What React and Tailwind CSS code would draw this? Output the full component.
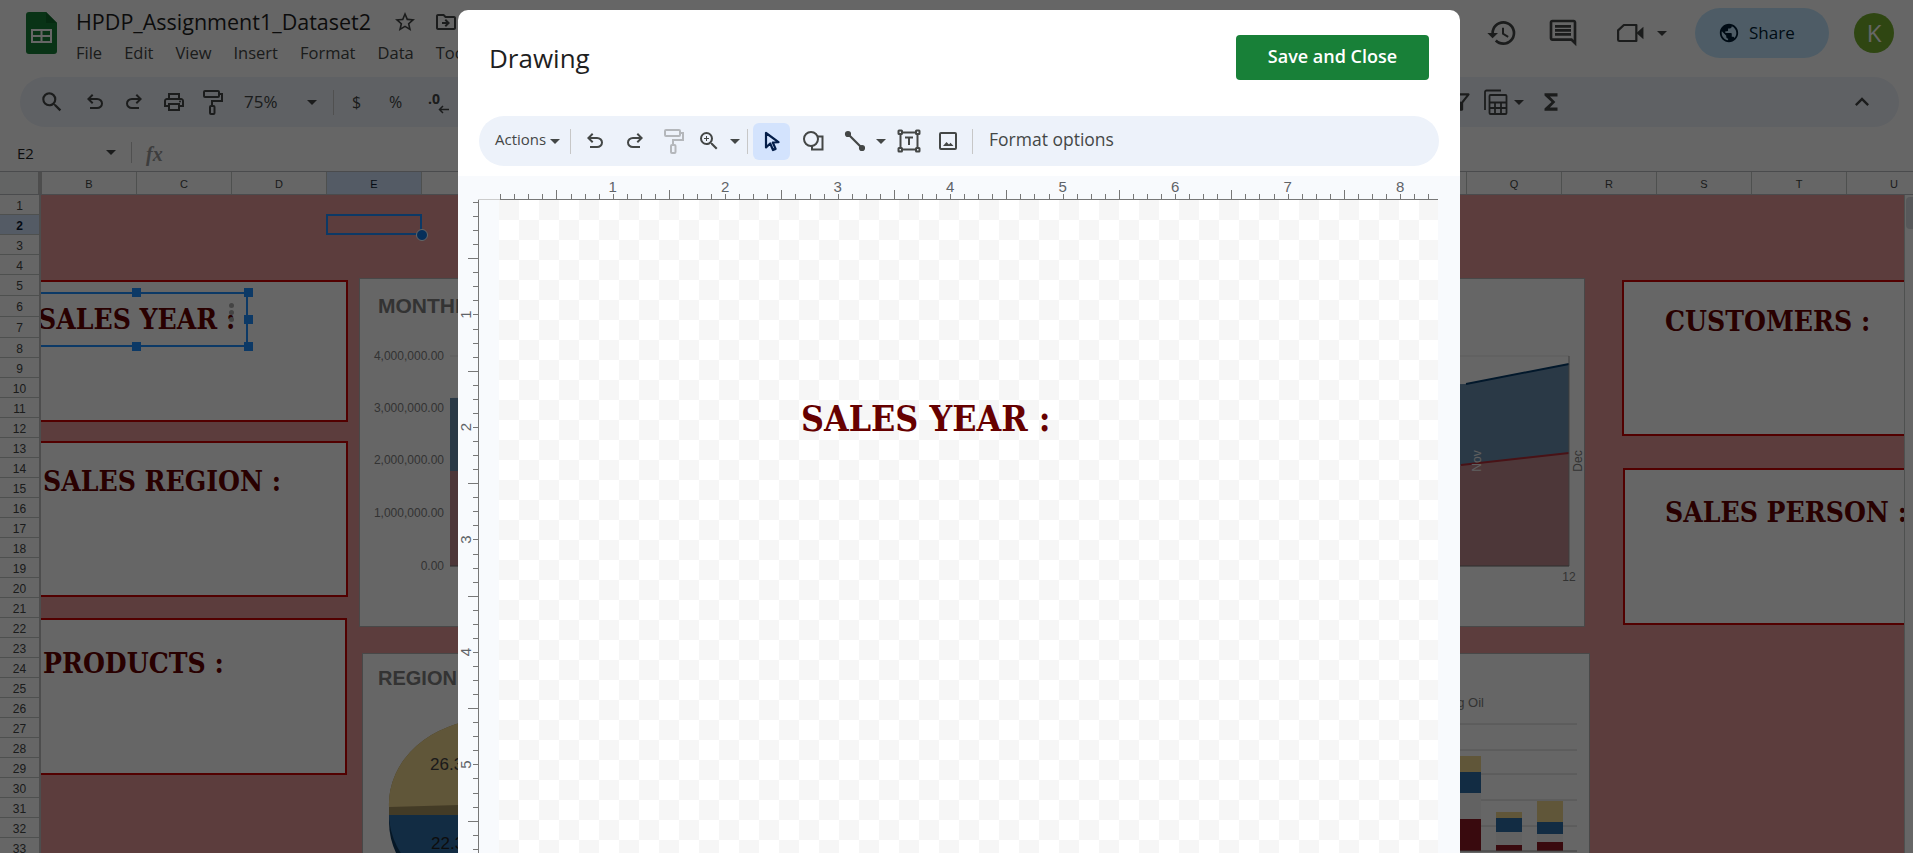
import React from 'react';
import { MdSearch, MdOutlinePrint, MdHistory, MdOutlineComment, MdPublic, MdKeyboardArrowUp, MdStarBorder, MdOutlineDriveFileMove, MdOutlineFilterAlt, MdFunctions, MdZoomIn } from 'react-icons/md';

const COLUMNS = ['B', 'C', 'D', 'E', 'F', 'G', 'H', 'I', 'J', 'K', 'L', 'M', 'N', 'O', 'P', 'Q', 'R', 'S', 'T', 'U'];
const ROWS = Array.from({ length: 33 }, (_, i) => i + 1);
const UNDO = 'M7 19v-2h7.1q1.575 0 2.738-1T18 13.5q0-1.5-1.162-2.5T14.1 10H7.8l2.6 2.6L9 14 4 9l5-5 1.4 1.4L7.8 8h6.3q2.425 0 4.163 1.575Q20 11.15 20 13.5t-1.737 3.925Q16.525 19 14.1 19Z';

const Caret = ({ color = '#444746' }) => (
    <svg width="10" height="5" viewBox="0 0 10 5" className="shrink-0"><path d="M0 0h10L5 5z" fill={color} /></svg>
);

const Undo = ({ flip, size = 24 }) => (
    <svg width={size} height={size} viewBox="0 0 24 24" fill="#444746" className={flip ? '-scale-x-100' : ''}><path d={UNDO} /></svg>
);

const Roller = ({ color = '#444746' }) => (
    <svg width="24" height="28" viewBox="0 0 24 28" fill="none" stroke={color} strokeWidth="2">
        <rect x="4" y="3" width="15" height="6" rx="1" />
        <path d="M19 6h3v7H12v5" />
        <rect x="10" y="18" width="4.5" height="8" rx="1" />
    </svg>
);

const Slot = ({ className, children }) => (
    <div className={`flex shrink-0 items-center justify-center ${className}`}>{children}</div>
);

const SheetsLogo = () => (
    <svg width="31" height="42" viewBox="0 0 31 42" className="shrink-0">
        <path d="M3 0h17l11 11v28a3 3 0 0 1-3 3H3a3 3 0 0 1-3-3V3a3 3 0 0 1 3-3z" fill="#188038" />
        <path d="M20 0v11h11z" fill="#0f6a2c" />
        <path d="M6 18h19v12H6zM6 24h19M15.5 18v12" fill="none" stroke="#fff" strokeWidth="2" />
    </svg>
);

const Header = () => (
    <div className="flex h-[66px] items-center pl-[26px] pr-[19px]">
        <SheetsLogo />
        <div className="ml-[19px] flex flex-col self-start pt-[7px]">
            <div className="flex h-[30px] items-center">
                <span className="text-[21.5px] text-[#1f1f1f]">HPDP_Assignment1_Dataset2</span>
                <MdStarBorder className="ml-[22px] text-[#444746]" size={24} />
                <MdOutlineDriveFileMove className="ml-[17px] text-[#444746]" size={24} />
            </div>
            <div className="mt-[3px] flex gap-[22px] text-[16.5px] leading-[26px] text-[#444746]">
                <span>File</span><span>Edit</span><span>View</span><span>Insert</span><span>Format</span><span>Data</span><span>Tools</span>
            </div>
        </div>
        <div className="ml-auto flex items-center">
            <Slot className="w-[32px]"><MdHistory size={32} className="text-[#444746]" /></Slot>
            <Slot className="ml-[29px] w-[32px]"><MdOutlineComment size={32} className="text-[#444746]" /></Slot>
            <Slot className="ml-[36px] w-[32px]">
                <svg width="36" height="28" viewBox="0 0 36 28" fill="none">
                    <path d="M10 5h14v18H5a1.5 1.5 0 0 1-1.500-1.500V11z" stroke="#444746" strokeWidth="2.500" strokeLinejoin="round" />
                    <path d="M24 14l8-7v14z" fill="#444746" />
                </svg>
            </Slot>
            <div className="ml-[10px]"><Caret /></div>
            <div className="ml-[28px] flex h-[50px] w-[134px] items-center rounded-full bg-[#c2e7ff] pl-[23px]">
                <MdPublic size={22} className="text-[#001d35]" />
                <span className="ml-[9px] text-[17px] text-[#001d35]">Share</span>
            </div>
            <div className="ml-[25px] flex h-[40px] w-[40px] items-center justify-center rounded-full bg-[#76b02f] text-[24px] text-white">K</div>
        </div>
    </div>
);

const SheetToolbar = () => (
    <div className="mx-[14px] ml-[20px] mt-[11px] flex h-[50px] items-center rounded-full bg-[#edf2fa] pl-[12px] pr-[23px] text-[#444746]">
        <Slot className="w-[40px]"><MdSearch size={26} /></Slot>
        <Slot className="w-[46px]"><Undo /></Slot>
        <Slot className="w-[32px]"><Undo flip /></Slot>
        <Slot className="w-[48px]"><MdOutlinePrint size={24} /></Slot>
        <Slot className="w-[28px]"><Roller /></Slot>
        <span className="ml-[18px] w-[34px] text-[17px]">75%</span>
        <div className="ml-[29px]"><Caret /></div>
        <div className="ml-[16px] h-[25px] w-px bg-[#c7c7c7]" />
        <span className="ml-[18px] w-[12px] text-[16px]">$</span>
        <span className="ml-[25px] w-[16px] text-[16px]">%</span>
        <div className="relative ml-[23px] h-[24px] w-[22px]">
            <span className="absolute left-0 top-[-2px] text-[14px] font-bold">.0</span>
            <svg className="absolute bottom-0 right-0" width="12" height="9" viewBox="0 0 12 9" fill="none" stroke="#444746" strokeWidth="1.500"><path d="M11 4.500H2M5 1L1.500 4.500 5 8" /></svg>
        </div>
        <div className="ml-auto flex items-center">
            <MdOutlineFilterAlt size={26} />
            <svg className="ml-[10px]" width="24" height="28" viewBox="0 0 24 28" fill="none" stroke="#444746" strokeWidth="1.800">
                <path d="M1 22V4a1.500 1.500 0 0 1 1.500-1.500H17" />
                <rect x="5.500" y="7" width="17" height="19" rx="1" />
                <path d="M5.500 14.500h17M5.500 20h17M11 14.500V26M17 14.500V26" />
            </svg>
            <div className="ml-[6px]"><Caret /></div>
            <MdFunctions size={26} className="ml-[14px]" />
            <MdKeyboardArrowUp size={28} className="ml-[284px]" />
        </div>
    </div>
);

const FormulaBar = () => (
    <div className="mt-[7px] flex h-[38px] items-center border-b border-[#b8bcc0] pl-[17px]">
        <span className="w-[89px] pt-[2px] text-[15px] text-[#1f1f1f]">E2</span>
        <Caret />
        <div className="ml-[15px] h-[21px] w-px bg-[#c7c7c7]" />
        <span className="ml-[14px] pt-[2px] font-['Liberation_Serif'] text-[20px] font-bold italic text-[#9a9a9a]">fx</span>
    </div>
);

const ColumnHeaders = () => (
    <div className="flex h-[23px] border-b border-[#b8bcc0] font-['Liberation_Sans'] text-[11px] text-[#444746]">
        <div className="w-[38px] shrink-0 bg-[#f8f9fa]" />
        <div className="w-[4px] shrink-0 bg-[#c0c0c0]" />
        {COLUMNS.map(col => (
            <div key={col} className={`flex w-[95px] shrink-0 items-center justify-center border-r border-[#c4c7c5] pt-[2px] ${col === 'E' ? 'bg-[#d3e3fd] text-[#0b1b33]' : ''}`}>{col}</div>
        ))}
    </div>
);

const RowHeaders = () => (
    <div className="flex w-[41px] shrink-0 flex-col border-r-2 border-[#c0c0c0] font-['Liberation_Sans'] text-[12px] text-[#444746]">
        {ROWS.map(row => {
            const tall = row >= 5 && row <= 7;
            return (
                <div key={row} className={`flex shrink-0 items-center justify-center border-b border-[#c4c7c5] pt-[2px] ${tall ? 'h-[21px]' : 'h-[20px]'} ${row === 2 ? 'bg-[#d3e3fd] font-bold text-[#0b1b33]' : ''}`}>{row}</div>
            );
        })}
    </div>
);

const cardTitle = "font-['DejaVu_Serif_Condensed','DejaVu_Serif',serif] text-[28px] font-bold leading-none whitespace-nowrap text-[#660000]";

const MonthlyChart = () => {
    const labels = [['4,000,000.00', 77], ['3,000,000.00', 129], ['2,000,000.00', 181], ['1,000,000.00', 234], ['0.00', 287]];
    return (
        <div className="absolute left-[318px] top-[83px] h-[349px] w-[1226px] border border-[#b5b5b5] bg-white">
            <div className="pl-[18px] pt-[11px] font-['Liberation_Sans'] text-[21px] font-bold text-[#7f7f7f]">MONTHLY SALES</div>
            <svg className="absolute left-0 top-0" width="1226" height="349" fontFamily="Liberation Sans" fontSize="12" fill="#7f7f7f">
                {labels.map(([text, y]) => (
                    <g key={text}>
                        <text x="84" y={y + 4} textAnchor="end">{text}</text>
                        <line x1="90" x2="1209" y1={y} y2={y} stroke="#e6e6e6" />
                    </g>
                ))}
                <path d="M90 119L1106 105L1209 85V174L1101 186L90 192z" fill="#6a8fb0" />
                <path d="M90 192L1101 186L1209 174V287H90z" fill="#c08a8e" />
                <path d="M1106 105L1209 85" stroke="#063c6b" strokeWidth="2" fill="none" />
                <path d="M1101 186L1209 174" stroke="#b52d37" strokeWidth="2" fill="none" />
                <line x1="1209" x2="1209" y1="77" y2="287" stroke="#999" />
                <line x1="90" x2="1209" y1="287" y2="287" stroke="#777" />
                <text transform="translate(1121 182) rotate(-90)" fill="#eee" fontSize="12" textAnchor="middle">Nov</text>
                <text transform="translate(1222 182) rotate(-90)" fontSize="12" textAnchor="middle">Dec</text>
                <text x="1209" y="302" textAnchor="middle">12</text>
            </svg>
        </div>
    );
};

const RegionChart = () => {
    const bars = [
        { x: 1083, w: 35, parts: [[102, 16, '#f0d68f'], [118, 21, '#2f6fa8'], [139, 26, '#f4f4f4'], [165, 32, '#8f1a24']] },
        { x: 1133, w: 26, parts: [[158, 6, '#f0d68f'], [164, 14, '#2f6fa8'], [178, 13, '#f4f4f4'], [191, 6, '#8f1a24']] },
        { x: 1174, w: 26, parts: [[147, 21, '#f0d68f'], [168, 12, '#2f6fa8'], [180, 8, '#f4f4f4'], [188, 9, '#8f1a24']] },
    ];
    return (
        <div className="absolute left-[321px] top-[458px] h-[250px] w-[1228px] border border-[#b5b5b5] bg-white">
            <div className="pl-[15px] pt-[9px] font-['Liberation_Sans'] text-[20px] font-bold text-[#7f7f7f]">REGION</div>
            <svg className="absolute left-0 top-0" width="1228" height="250" fontFamily="Liberation Sans" fill="#7f7f7f">
                <ellipse cx="128" cy="168" rx="102" ry="85" fill="#0d3a60" />
                <ellipse cx="132" cy="160" rx="106" ry="85" fill="#2f6fa8" />
                <path d="M26 153a102 85 0 0 1 204-6v14L26 161z" fill="#a8945f" />
                <path d="M26 153a102 85 0 0 1 204-6l-204 6z" fill="#f0d68f" />
                <text x="67" y="116" fontSize="17" fill="#444">26.3%</text>
                <text x="68" y="195" fontSize="17" fill="#222">22.3%</text>
                <text x="1121" y="53" fontSize="13" textAnchor="end">Cooking Oil</text>
                {[70, 96, 120, 146, 172].map(y => (
                    <line key={y} x1="1040" x2="1214" y1={y} y2={y} stroke="#d0d0d0" />
                ))}
                {bars.map(bar => bar.parts.map(([y, h, color]) => (
                    <rect key={`${bar.x}-${y}`} x={bar.x} y={y} width={bar.w} height={h} fill={color} />
                )))}
                <line x1="1040" x2="1214" y1="197" y2="197" stroke="#999" />
            </svg>
        </div>
    );
};

const SheetCanvas = () => (
    <div className="relative flex-1 overflow-hidden bg-[#e69a99]">
        <div className="absolute left-[-20px] top-[85px] h-[142px] w-[327px] border-2 border-[#cc0000] bg-white pl-[15px] pt-[24px]">
            <div className={cardTitle}>SALES YEAR :</div>
        </div>
        <div className="absolute left-[-20px] top-[246px] h-[156px] w-[327px] border-2 border-[#cc0000] bg-white pl-[20px] pt-[25px]">
            <div className={cardTitle}>SALES REGION :</div>
        </div>
        <div className="absolute left-[-20px] top-[423px] h-[157px] w-[326px] border-2 border-[#cc0000] bg-white pl-[20px] pt-[30px]">
            <div className={cardTitle}>PRODUCTS :</div>
        </div>

        <div className="absolute left-[-20px] top-[97px] h-[55px] w-[227px] border-2 border-[#1f8fff]" />
        <div className="absolute left-[91px] top-[93px] h-[9px] w-[9px] bg-[#1f8fff]" />
        <div className="absolute left-[91px] top-[147px] h-[9px] w-[9px] bg-[#1f8fff]" />
        <div className="absolute left-[203px] top-[93px] h-[9px] w-[9px] bg-[#1f8fff]" />
        <div className="absolute left-[203px] top-[120px] h-[9px] w-[9px] bg-[#1f8fff]" />
        <div className="absolute left-[203px] top-[147px] h-[9px] w-[9px] bg-[#1f8fff]" />
        <div className="absolute left-[188px] top-[108px] flex flex-col gap-[2px]">
            <div className="h-[5px] w-[5px] rounded-full bg-[#aaa]" />
            <div className="h-[5px] w-[5px] rounded-full bg-[#aaa]" />
            <div className="h-[5px] w-[5px] rounded-full bg-[#aaa]" />
        </div>

        <div className="absolute left-[285px] top-[19px] h-[21px] w-[96px] border-2 border-[#1f8fff]" />
        <div className="absolute left-[375px] top-[34px] h-[12px] w-[12px] rounded-full border border-white bg-[#0f75e0]" />

        <MonthlyChart />
        <RegionChart />

        <div className="absolute left-[1581px] top-[85px] h-[156px] w-[320px] border-2 border-[#cc0000] bg-white pl-[41px] pt-[26px]">
            <div className={cardTitle}>CUSTOMERS :</div>
        </div>
        <div className="absolute left-[1582px] top-[273px] h-[157px] w-[320px] border-2 border-[#cc0000] bg-white pl-[40px] pt-[29px]">
            <div className={cardTitle}>SALES PERSON :</div>
        </div>
    </div>
);

const Scrollbar = () => (
    <div className="w-[9px] shrink-0 border-l border-[#c4c7c5] bg-white pl-[1px] pt-[2px]">
        <div className="h-[32px] w-[7px] rounded-l-[4px] bg-[#dadce0]" />
    </div>
);

const TopRuler = () => {
    const ticks = Array.from({ length: 68 }, (_, i) => i);
    return (
        <svg width="980" height="24" className="block" fontFamily="Liberation Sans" fontSize="15" fill="#5f6368">
            <line x1="20" x2="42" y1="23.500" y2="23.500" stroke="#cccccc" />
            <line x1="42" x2="980" y1="23.500" y2="23.500" stroke="#777" />
            {ticks.map(i => {
                const x = Math.round(42.2 + 14.06 * i) + 0.5;
                const tall = i % 8 === 4;
                return <line key={i} x1={x} x2={x} y1={tall ? 14 : 18} y2="24" stroke="#777" />;
            })}
            {[1, 2, 3, 4, 5, 6, 7, 8].map(n => (
                <text key={n} x={42.2 + 112.5 * n} y="16" textAnchor="middle">{n}</text>
            ))}
        </svg>
    );
};

const LeftRuler = () => {
    const ticks = Array.from({ length: 47 }, (_, i) => i);
    return (
        <svg width="41" height="653" className="block shrink-0" fontFamily="Liberation Sans" fontSize="15" fill="#5f6368">
            <line x1="20.500" x2="20.500" y1="0" y2="653" stroke="#777" />
            {ticks.map(i => {
                const y = Math.round(2 + 14.06 * i) + 0.5;
                const tall = i % 8 === 4;
                return <line key={i} x1={tall ? 10 : 15} x2="20" y1={y} y2={y} stroke="#777" />;
            })}
            {[1, 2, 3, 4, 5].map(n => (
                <text key={n} transform={`translate(13 ${2 + 112.5 * n}) rotate(-90)`} textAnchor="middle">{n}</text>
            ))}
        </svg>
    );
};

const DrawingToolbar = () => (
    <div className="mx-[21px] flex h-[50px] items-center rounded-full bg-[#edf2fa] pl-[16px] text-[#444746]">
        <span className="w-[52px] pb-[3px] text-[15px]">Actions</span>
        <div className="ml-[3px]"><Caret /></div>
        <div className="ml-[10px] h-[25px] w-px bg-[#c7c7c7]" />
        <Slot className="ml-[4px] w-[40px]"><Undo /></Slot>
        <Slot className="w-[40px]"><Undo flip /></Slot>
        <Slot className="w-[36px]"><Roller color="#b4b7bb" /></Slot>
        <Slot className="w-[36px]"><MdZoomIn size={24} /></Slot>
        <Slot className="w-[16px]"><Caret /></Slot>
        <div className="ml-[4px] h-[25px] w-px bg-[#c7c7c7]" />
        <Slot className="ml-[5px] h-[37px] w-[37px] rounded-[6px] bg-[#d3e3fd]">
            <svg width="24" height="24" viewBox="0 0 24 24" fill="none" stroke="#041e49" strokeWidth="2.200" strokeLinejoin="round">
                <path d="M6 4l0 14.500 4.200-4 2.800 6.500 2.600-1.100-2.800-6.400 5.700-.3z" />
            </svg>
        </Slot>
        <Slot className="w-[47px]">
            <svg width="26" height="26" viewBox="0 0 26 26" fill="none" stroke="#444746" strokeWidth="2">
                <circle cx="10" cy="11" r="7" />
                <path d="M16 8.500h5.500V21.500H11V18" />
            </svg>
        </Slot>
        <Slot className="w-[35px]">
            <svg width="24" height="24" viewBox="0 0 24 24" fill="none" stroke="#444746" strokeWidth="2.200">
                <path d="M5 5l14 14" />
                <circle cx="5" cy="5" r="2" fill="#444746" />
                <circle cx="19" cy="19" r="2" fill="#444746" />
            </svg>
        </Slot>
        <Slot className="w-[18px]"><Caret /></Slot>
        <Slot className="w-[38px]">
            <svg width="24" height="24" viewBox="0 0 24 24" fill="none" stroke="#444746" strokeWidth="2">
                <path d="M5 3.500h14M5 20.500h14M3.500 5v14M20.500 5v14" />
                <rect x="1.500" y="1.500" width="3.500" height="3.500" rx=".5" />
                <rect x="19" y="1.500" width="3.500" height="3.500" rx=".5" />
                <rect x="1.500" y="19" width="3.500" height="3.500" rx=".5" />
                <rect x="19" y="19" width="3.500" height="3.500" rx=".5" />
                <path d="M8 8.500h8M12 8.500v7.500" />
            </svg>
        </Slot>
        <Slot className="w-[39px]">
            <svg width="24" height="24" viewBox="0 0 24 24">
                <rect x="4" y="4" width="16" height="16" rx="1" fill="none" stroke="#444746" strokeWidth="2" />
                <path d="M7 17l3.500-4 2.500 2.500 1.500-1.800 3 3.300z" fill="#444746" />
            </svg>
        </Slot>
        <div className="ml-[5px] h-[25px] w-px bg-[#c7c7c7]" />
        <span className="ml-[16px] pb-[3px] text-[17.5px]">Format options</span>
    </div>
);

const DrawingDialog = () => (
    <div className="absolute left-[458px] top-[10px] h-[843px] w-[1002px] overflow-hidden rounded-t-[10px] bg-white">
        <div className="flex h-[95px] items-center justify-between pl-[31px] pr-[31px]">
            <span className="pt-[1px] text-[26px] text-[#1f1f1f]">Drawing</span>
            <button className="flex h-[45px] w-[193px] items-center justify-center rounded-[4px] bg-[#188038] pb-[2px] text-[18px] font-semibold text-white">Save and Close</button>
        </div>
        <div className="mt-[11px]"><DrawingToolbar /></div>
        <div className="mt-[10px] h-[677px] bg-[#f8fafd]">
            <TopRuler />
            <div className="flex">
                <LeftRuler />
                <div className="h-[653px] w-[939px] bg-[conic-gradient(#ffffff_25%,#f6f6f6_0_50%,#ffffff_0_75%,#f6f6f6_0)] bg-[length:40px_40px] pl-[302px] pt-[201px]">
                    <div className="font-['DejaVu_Serif_Condensed','DejaVu_Serif',serif] text-[35.4px] font-bold leading-none whitespace-nowrap text-[#660000]">SALES YEAR :</div>
                </div>
            </div>
        </div>
    </div>
);

const App = () => {
    return (
        <div className="relative h-[853px] w-full overflow-hidden bg-white font-['Open_Sans',sans-serif]">
            <Header />
            <SheetToolbar />
            <FormulaBar />
            <ColumnHeaders />
            <div className="flex h-[658px]">
                <RowHeaders />
                <SheetCanvas />
                <Scrollbar />
            </div>
            <div className="absolute inset-0 bg-black/60" />
            <DrawingDialog />
        </div>
    );
};

export default App;
